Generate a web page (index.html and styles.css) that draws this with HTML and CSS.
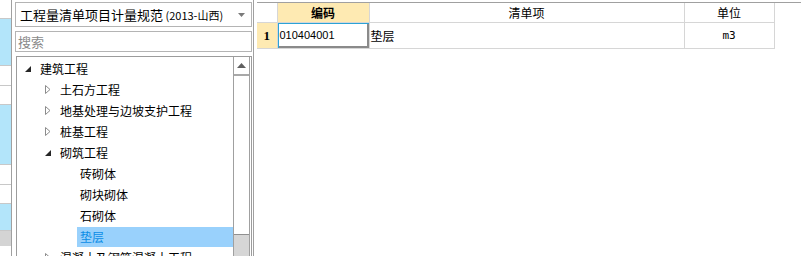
FILE: index.html
```html
<!DOCTYPE html>
<html lang="zh-CN">
<head>
<meta charset="UTF-8">
<title>清单库</title>
<link rel="stylesheet" href="styles.css">
</head>
<body>

<div class="app">
    <div class="strip">
        <div class="strip-row s-white" style="height: 19px"></div>
        <div class="strip-row s-blue" style="height: 47px"></div>
        <div class="strip-row s-white" style="height: 20px"></div>
        <div class="strip-row s-white" style="height: 19px"></div>
        <div class="strip-row s-blue" style="height: 60px"></div>
        <div class="strip-row s-white" style="height: 20px"></div>
        <div class="strip-row s-white" style="height: 19px"></div>
        <div class="strip-row s-blue" style="height: 27px"></div>
        <div class="strip-row s-gray" style="height: 15px"></div>
    </div>
    <div class="strip-edge"></div>

    <div class="lib-panel">
        <div class="combo">
            <span class="combo-text">工程量清单项目计量规范<span class="combo-sub"> (2013-山西)</span></span>
            <svg class="combo-arrow" width="7" height="4" viewBox="0 0 7 4"><path d="M0 0h7L3.5 4z" fill="#7a7a7a"/></svg>
        </div>
        <div class="search">搜索</div>

        <div class="tree">
            <ul class="tree-list">
                <li class="node lv1">
                    <span class="twisty"><svg width="6" height="6" viewBox="0 0 6 6"><path d="M6 0V6H0z" fill="#262626"/></svg></span>
                    <span class="label">建筑工程</span>
                </li>
                <li class="node lv2">
                    <span class="twisty"><svg width="6" height="9" viewBox="0 0 6 9"><path d="M0.5 0.5L5 4.5 0.5 8.5z" fill="#fff" stroke="#8c8c8c"/></svg></span>
                    <span class="label">土石方工程</span>
                </li>
                <li class="node lv2">
                    <span class="twisty"><svg width="6" height="9" viewBox="0 0 6 9"><path d="M0.5 0.5L5 4.5 0.5 8.5z" fill="#fff" stroke="#8c8c8c"/></svg></span>
                    <span class="label">地基处理与边坡支护工程</span>
                </li>
                <li class="node lv2">
                    <span class="twisty"><svg width="6" height="9" viewBox="0 0 6 9"><path d="M0.5 0.5L5 4.5 0.5 8.5z" fill="#fff" stroke="#8c8c8c"/></svg></span>
                    <span class="label">桩基工程</span>
                </li>
                <li class="node lv2">
                    <span class="twisty"><svg width="6" height="6" viewBox="0 0 6 6"><path d="M6 0V6H0z" fill="#262626"/></svg></span>
                    <span class="label">砌筑工程</span>
                </li>
                <li class="node lv3"><span class="twisty"></span><span class="label">砖砌体</span></li>
                <li class="node lv3"><span class="twisty"></span><span class="label">砌块砌体</span></li>
                <li class="node lv3"><span class="twisty"></span><span class="label">石砌体</span></li>
                <li class="node lv3 selected"><span class="twisty"></span><span class="label">垫层</span></li>
                <li class="node lv2">
                    <span class="twisty"><svg width="6" height="9" viewBox="0 0 6 9"><path d="M0.5 0.5L5 4.5 0.5 8.5z" fill="#fff" stroke="#8c8c8c"/></svg></span>
                    <span class="label">混凝土及钢筋混凝土工程</span>
                </li>
            </ul>
            <div class="vscroll">
                <div class="vs-up"><svg width="9" height="5" viewBox="0 0 9 5"><path d="M4.5 0L9 5H0z" fill="#606060"/></svg></div>
                <div class="vs-track"></div>
                <div class="vs-foot"></div>
            </div>
        </div>
    </div>

    <div class="splitter"></div>

    <div class="grid-pane">
        <table class="grid">
            <colgroup>
                <col class="c-no">
                <col class="c-code">
                <col class="c-item">
                <col class="c-unit">
            </colgroup>
            <thead>
                <tr>
                    <th class="corner"></th>
                    <th class="sorted">编码</th>
                    <th>清单项</th>
                    <th>单位</th>
                </tr>
            </thead>
            <tbody>
                <tr>
                    <td class="row-no">1</td>
                    <td class="code active">010404001</td>
                    <td class="item">垫层</td>
                    <td class="unit">m3</td>
                </tr>
            </tbody>
        </table>
    </div>
</div>

</body>
</html>
```

FILE: styles.css
```css
body {
    margin: 0;
    padding: 0;
    background-color: #fff;
    font-family: "Noto Sans CJK SC", "Noto Sans", sans-serif;
    font-size: 12px;
    color: #000;
}
.app {
    display: flex;
    width: 801px;
    height: 256px;
    overflow: hidden;
}

/* left stripe from the neighbouring view */
.strip {
    width: 11px;
    display: flex;
    flex-direction: column;
}
.strip-row {
    border-bottom: 1px solid #c8c8c8;
    box-sizing: border-box;
    flex-shrink: 0;
}
.s-white { background-color: #fff; }
.s-blue { background-color: #b3e5fa; }
.s-gray { background-color: #d4d4d4; border-bottom: none; }
.strip-edge {
    width: 1px;
    background-color: #a0a0a0;
}

/* library panel */
.lib-panel {
    width: 237px;
    padding: 2px 0 0 3px;
    display: flex;
    flex-direction: column;
    gap: 4px;
    min-height: 0;
}
.combo {
    flex-shrink: 0;
    height: 25px;
    box-sizing: border-box;
    border: 1px solid #b4b4b4;
    display: flex;
    align-items: center;
    justify-content: space-between;
    padding: 0 6px 0 4px;
}
.combo-text {
    font-size: 13px;
    line-height: 16px;
}
.combo-sub {
    font-size: 11px;
}
.search {
    flex-shrink: 0;
    height: 21px;
    box-sizing: border-box;
    border: 1px solid #b4b4b4;
    color: #8a8a8a;
    font-size: 13px;
    line-height: 19px;
    padding-left: 2px;
}
.tree {
    flex: 1;
    min-height: 0;
    overflow: hidden;
    margin-left: 1px;
    border: 1px solid #9c9c9c;
    border-bottom: none;
    display: flex;
}
.tree-list {
    list-style: none;
    margin: 0;
    padding: 1px 0 0 0;
    flex: 1;
}
.node {
    height: 21px;
    display: flex;
    align-items: center;
    white-space: nowrap;
}
.lv1 { padding-left: 8px; }
.lv2 { padding-left: 28px; }
.lv3 { padding-left: 48px; }
.twisty {
    width: 15px;
    display: flex;
    align-items: center;
}
.label {
    flex: 1;
    height: 20px;
    line-height: 20px;
    margin-left: -3px;
    padding-left: 3px;
}
.selected .label {
    background-color: #99d1fc;
    color: #0b8de6;
}
.vscroll {
    width: 17px;
    margin-right: 1px;
    display: flex;
    flex-direction: column;
    border-left: 1px solid #a0a0a0;
    border-right: 1px solid #a0a0a0;
    box-sizing: border-box;
}
.vs-up {
    flex-shrink: 0;
    height: 17px;
    border-bottom: 2px solid #a8a8a8;
    display: flex;
    align-items: center;
    justify-content: center;
}
.vs-track {
    flex-shrink: 0;
    height: 158px;
    background-color: #fff;
}
.vs-foot {
    flex: 1;
    background-color: #d6d6d6;
    border-top: 1px solid #909090;
}

.splitter {
    width: 4px;
    box-sizing: border-box;
    margin-left: 1px;
    border-left: 1px solid #a0a0a0;
}

/* grid */
.grid-pane {
    flex: 1;
    margin-top: 2px;
    border-top: 1px solid #a0a0a0;
}
.grid {
    border-collapse: collapse;
    table-layout: fixed;
    width: 517px;
}
.c-no { width: 20px; }
.c-code { width: 92px; }
.c-item { width: 315px; }
.c-unit { width: 90px; }
.grid th, .grid td {
    border: 1px solid #d6d6d6;
    padding: 0;
    white-space: nowrap;
    overflow: hidden;
}
.grid thead th {
    border-top: none;
}
.grid th {
    height: 19px;
    font-weight: normal;
    line-height: 19px;
}
.grid th.sorted {
    background-color: #feeab2;
    font-weight: bold;
}
.grid th.corner {
    border-left: none;
}
.grid td {
    height: 25px;
    line-height: 25px;
}
.grid td.row-no {
    border-left: none;
}
.row-no {
    background-color: #feeab2;
    text-align: center;
    font-family: "Liberation Serif", serif;
    font-weight: bold;
    font-size: 13px;
}
.code {
    font-family: "Liberation Sans", sans-serif;
    font-size: 11px;
    padding-left: 2px !important;
}
.code.active {
    box-shadow: inset 1px 1px 0 #2ba3d6, inset -2px -2px 0 #8a8a8a;
}
.item {
    padding-left: 1px !important;
}
.unit {
    text-align: center;
    font-family: "DejaVu Sans Mono", monospace;
    font-size: 11px;
}
```
